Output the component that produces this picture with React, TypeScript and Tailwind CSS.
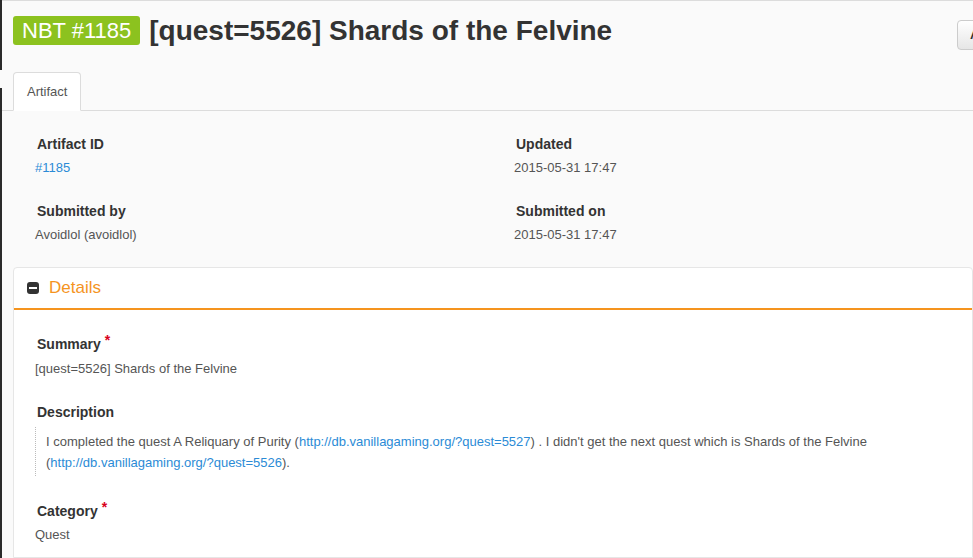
import React from 'react';

// Artifact detail page (tracker view)
const fields = [
    { label: 'Artifact ID', value: '#1185', link: true },
    { label: 'Updated', value: '2015-05-31 17:47', link: false },
    { label: 'Submitted by', value: 'Avoidlol (avoidlol)', link: false },
    { label: 'Submitted on', value: '2015-05-31 17:47', link: false },
];

const Label: React.FC<{ text: string; required?: boolean }> = ({ text, required }) => (
    <div className="pl-[2px] text-[14px] leading-[20px] font-bold text-[#333]">
        {text}
        {required && <span className="ml-[4px] text-[#d9001b] relative -top-[4px]">*</span>}
    </div>
);

const App: React.FC = () => {
    return (
        <div
            className="w-full h-[558px] overflow-hidden bg-[#fafafa] flex text-[13px] text-[#555]"
            style={{ fontFamily: '"Liberation Sans", Arial, sans-serif' }}
        >
            {/* dark window edge on the left */}
            <div className="w-[2px] shrink-0 flex flex-col">
                <div className="h-[70px] bg-[#2a2a2a]"></div>
                <div className="h-[18px]"></div>
                <div className="flex-1 bg-[#2a2a2a]"></div>
            </div>

            <div className="flex-1 min-w-0 flex flex-col border-t border-[#dcdcdc]">
                {/* header */}
                <div className="h-[34px] mt-[15px] flex items-start pl-[11px]">
                    <span className="h-[29px] px-[9px] flex items-center rounded-[3px] bg-[#8cc21f] text-white text-[22px] leading-none">
                        NBT #1185
                    </span>
                    <h1 className="ml-[9px] text-[28px] leading-[29px] font-bold text-[#333]">
                        [quest=5526] Shards of the Felvine
                    </h1>
                    <button className="ml-auto -mr-[70px] mt-[4px] w-[86px] h-[30px] shrink-0 border border-[#ccc] rounded-[4px] bg-gradient-to-b from-white to-[#e6e6e6] text-left pl-[12px] text-[13px] font-bold text-[#333]">
                        Actions
                    </button>
                </div>

                {/* tabs */}
                <div className="mt-[22px] pl-[11px] border-b border-[#dcdcdc] flex">
                    <div className="-mb-px px-[13px] py-[10px] leading-[17px] bg-white border border-[#dcdcdc] border-b-white rounded-t-[4px] text-[#555]">
                        Artifact
                    </div>
                </div>

                {/* general fields */}
                <div className="grid grid-cols-[479px_1fr] gap-y-[23px] pl-[33px] pt-[23px] pb-[22px]">
                    {fields.map((f, i) => (
                        <div key={i}>
                            <Label text={f.label} />
                            <div className={`mt-[4px] leading-[20px] ${f.link ? 'text-[#2b8bd6]' : 'text-[#555]'}`}>
                                {f.value}
                            </div>
                        </div>
                    ))}
                </div>

                {/* details panel */}
                <div className="ml-[11px] flex-1 bg-white border border-[#e6e6e6] rounded-t-[4px]">
                    <div className="h-[42px] flex items-center pl-[13px] border-b-2 border-[#f5941e]">
                        <span className="w-[12px] h-[12px] rounded-[3px] bg-[#333] flex items-center justify-center">
                            <span className="w-[8px] h-[2px] bg-white"></span>
                        </span>
                        <span className="ml-[10px] text-[17px] leading-[20px] text-[#f5941e]">Details</span>
                    </div>

                    <div className="pl-[21px] pt-[24px]">
                        <Label text="Summary" required />
                        <div className="mt-[5px] leading-[20px]">[quest=5526] Shards of the Felvine</div>

                        <div className="mt-[23px]">
                            <Label text="Description" />
                        </div>
                        <div className="mt-[5px] pl-[10px] pt-[4px] pb-[3px] border-l border-dotted border-[#bbb] leading-[21px]">
                            I completed the quest A Reliquary of Purity (<span className="text-[#2b8bd6]">http://db.vanillagaming.org/?quest=5527</span>) . I didn't get the next quest which is Shards of the Felvine (<span className="text-[#2b8bd6]">http://db.vanillagaming.org/?quest=5526</span>).
                        </div>

                        <div className="mt-[25px]">
                            <Label text="Category" required />
                        </div>
                        <div className="mt-[4px] leading-[20px]">Quest</div>
                    </div>
                </div>
            </div>
        </div>
    );
};

export default App;
